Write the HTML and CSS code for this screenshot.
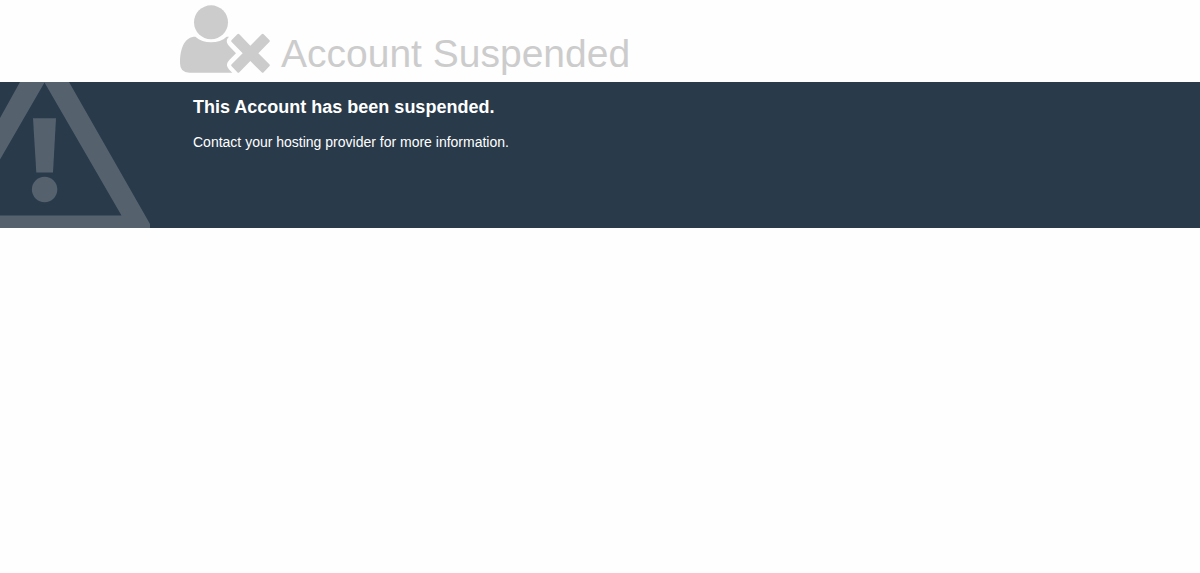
FILE: index.html
```html
<!DOCTYPE html>
<html lang="en">
<head>
<meta charset="utf-8">
<title>Account Suspended</title>
<link rel="stylesheet" href="styles.css">
</head>
<body>
<header class="page-header">
  <div class="container heading">
    <svg class="user-icon" viewBox="30 15 270 204" aria-hidden="true">
      <circle cx="123" cy="67" r="51"/>
      <path d="M76 110C89 121 105 127 123 127C142 127 158 121 170 110L177 110Q168 118 171 128Q173 134 180 141L198 160L180 178Q170 188 171 197Q173 206 187 218H58Q30 218 30 190C30 142 45 110 76 110Z"/>
      <path d="M202 103Q205 100 208 103L241 137L275 103Q278 100 281 103L298 120Q301 123 298 126L265 160L298 193Q301 196 298 199L281 217Q278 220 275 217L241 183L208 217Q205 220 202 217L185 199Q182 196 185 193L218 160L185 126Q182 123 185 120Z"/>
    </svg>
    <h1 class="title">Account Suspended</h1>
  </div>
</header>
<main class="notice">
  <svg class="warning-icon" viewBox="0 0 150 146" aria-hidden="true">
    <path fill-rule="evenodd" d="M0 36L20 0H69L150 142V146H0V133.500H121.500L44.500 .5L0 77.500Z"/>
    <path d="M33 36.300H56L53 90.500H36.300Z"/>
    <circle cx="44.600" cy="107.500" r="12.700"/>
  </svg>
  <div class="container">
    <div class="message">
      <h2 class="message-title">This Account has been suspended.</h2>
      <p class="message-text">Contact your hosting provider for more information.</p>
    </div>
  </div>
</main>
</body>
</html>
```
FILE: styles.css
```css
body {
  margin: 0;
  background: #fefefe;
  font-family: "Liberation Sans", Arial, sans-serif;
}

.container {
  width: 70%;
  margin: 0 auto;
}

.heading {
  display: flex;
  align-items: flex-end;
  gap: 11px;
  padding: 5px 0 9px;
  color: #cccccc;
}

.user-icon {
  width: 90px;
  height: 68px;
  flex: none;
  fill: #cccccc;
}

.title {
  margin: 0;
  font-size: 39px;
  line-height: 38px;
  font-weight: 400;
}

.notice {
  position: relative;
  min-height: 146px;
  background: #293a4a;
  color: #ffffff;
}

.warning-icon {
  position: absolute;
  left: 0;
  bottom: 0;
  width: 150px;
  height: 146px;
  fill: #55626e;
}

.message {
  position: relative;
  padding: 15px 13px;
}

.message-title {
  margin: 0 0 14px;
  font-size: 18px;
  line-height: 20px;
}

.message-text {
  margin: 0;
  font-size: 14px;
  line-height: 22px;
}
```
